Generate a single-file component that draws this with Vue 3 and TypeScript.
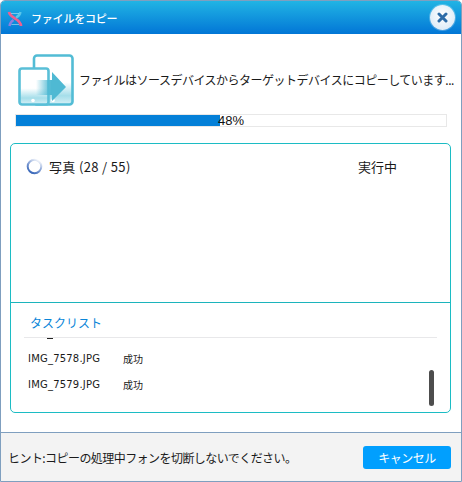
<script setup lang="ts">
const percent = 48
const tasks = [
  { name: 'IMG_7578.JPG', status: '成功' },
  { name: 'IMG_7579.JPG', status: '成功' },
]
</script>

<template>
  <div class="window">
    <header class="titlebar">
      <svg class="logo" width="20" height="20" viewBox="0 0 20 20" fill="none">
        <path d="M3 4 C4.500 11 14.500 10 15 18" stroke="#ee5f8f" stroke-width="2.800" />
        <path d="M14.500 4 C14 7 12 8.500 10 9.500" stroke="#58c6ea" stroke-width="2.400" />
        <path d="M7.500 12 C5 13.500 3.800 15.500 3.500 18" stroke="#8c7fe0" stroke-width="2.400" />
        <path d="M5 5.500 H13 M5.500 16.500 H13" stroke="#9fd8ee" stroke-width="1" opacity=".7" />
      </svg>
      <span class="title">ファイルをコピー</span>
      <button class="close" aria-label="閉じる">
        <svg width="11" height="11" viewBox="0 0 11 11">
          <path d="M2 2 L9 9 M9 2 L2 9" stroke="#2d6ca8" stroke-width="3" stroke-linecap="round" />
        </svg>
      </button>
    </header>

    <main class="body">
      <section class="intro">
        <svg class="copy-icon" width="56" height="52" viewBox="0 0 56 52">
          <defs>
            <linearGradient id="fade" x1="0" y1="0" x2="1" y2="0">
              <stop offset="0" stop-color="#4fb9d3" stop-opacity="0" />
              <stop offset=".5" stop-color="#4fb9d3" />
            </linearGradient>
            <linearGradient id="base" x1="0" y1="0" x2="0" y2="1">
              <stop offset=".55" stop-color="#ffffff" />
              <stop offset=".82" stop-color="#a5deea" />
              <stop offset="1" stop-color="#d6f0f6" />
            </linearGradient>
          </defs>
          <rect x="16" y="1.500" width="38.500" height="49" rx="3" fill="url(#base)" stroke="#52bcd5" stroke-width="2.600" />
          <rect x="1.500" y="14.500" width="29" height="36" rx="2.500" fill="url(#base)" stroke="#59bfd7" stroke-width="2.600" />
          <circle cx="15" cy="46.500" r="1.800" fill="#fff" />
          <circle cx="35" cy="46.500" r="1.800" fill="#fff" />
          <path d="M18 26 H34 V18 L48 33 L34 47 V41 H18 Z" fill="url(#fade)" />
        </svg>
        <p class="message">ファイルはソースデバイスからターゲットデバイスにコピーしています...</p>
      </section>

      <div class="progress">
        <div class="progress-fill" :style="{ width: `calc(${percent}% - 2px)` }"></div>
        <span class="progress-label">{{ percent }}%</span>
      </div>

      <section class="panel">
        <div class="current">
          <svg class="spinner" width="17" height="17" viewBox="0 0 17 17" fill="none">
            <defs>
              <linearGradient id="spin" x1=".2" y1="1" x2=".8" y2="0">
                <stop offset="0" stop-color="#2f5fb5" />
                <stop offset=".55" stop-color="#8fa9d9" />
                <stop offset="1" stop-color="#ffffff" />
              </linearGradient>
            </defs>
            <circle cx="8.500" cy="8.500" r="6.800" stroke="url(#spin)" stroke-width="2" />
          </svg>
          <span class="current-name">写真 (28 / 55)</span>
          <span class="current-state">実行中</span>
        </div>
        <div class="tasks">
          <h2 class="tasks-title">タスクリスト</h2>
          <div class="tasks-rule"><span class="clipped-mark"></span></div>
          <div class="task-rows">
            <div v-for="t in tasks" :key="t.name" class="task">
              <span class="task-name">{{ t.name }}</span>
              <span class="task-status">{{ t.status }}</span>
            </div>
            <div class="scrollbar"></div>
          </div>
        </div>
      </section>
    </main>

    <footer class="footer">
      <span class="hint">ヒント:コピーの処理中フォンを切断しないでください。</span>
      <button class="cancel">キャンセル</button>
    </footer>
  </div>
</template>

<style>
html, body { margin: 0; background: #fff; }
</style>

<style scoped>
.window {
  width: 462px;
  height: 482px;
  box-sizing: border-box;
  border: 1px solid #7f9fbf;
  border-radius: 5px 5px 0 0;
  display: flex;
  flex-direction: column;
  overflow: hidden;
  background: #fff;
  font-family: "Noto Sans CJK JP", "Liberation Sans", sans-serif;
  color: #1a1a1a;
}
.titlebar {
  height: 33px;
  flex: none;
  display: flex;
  align-items: center;
  padding: 0 6px 0 5px;
  background: linear-gradient(#21b4e4, #0276d6);
}
.logo { flex: none; }
.title {
  margin-left: 5px;
  color: #fff;
  font-size: 11px;
  font-weight: 500;
  letter-spacing: -0.2px;
}
.close {
  margin-left: auto;
  width: 25px;
  height: 25px;
  padding: 0;
  border: 0;
  border-radius: 50%;
  background: radial-gradient(circle at 50% 40%, #fff, #dbeaf6 80%);
  box-shadow: 0 0 0 1px rgba(255, 255, 255, .25);
  display: flex;
  align-items: center;
  justify-content: center;
}
.body {
  flex: 1;
  min-height: 0;
  display: flex;
  flex-direction: column;
  padding: 20px 10px 19px 9px;
}
.intro {
  display: flex;
  align-items: center;
  padding-left: 8px;
  height: 52px;
}
.copy-icon { flex: none; }
.message {
  margin: 0 0 1px 5px;
  white-space: nowrap;
  font-size: 12px;
  letter-spacing: -0.5px;
}
.progress {
  position: relative;
  margin: 8px 4px 0 5px;
  height: 13px;
  box-sizing: border-box;
  border: 1px solid #e8e8e8;
  background: #fff;
}
.progress-fill {
  height: 100%;
  background: #0480d8;
}
.progress-label {
  position: absolute;
  inset: 0;
  text-align: center;
  font: 13px/11px "Liberation Sans", sans-serif;
  color: #111;
}
.panel {
  flex: 1;
  margin-top: 16px;
  min-height: 0;
  border: 1px solid #1cbcc4;
  border-radius: 5px;
  display: flex;
  flex-direction: column;
}
.current {
  height: 159px;
  flex: none;
  box-sizing: border-box;
  border-bottom: 1px solid #1cb4bc;
  display: flex;
  align-items: flex-start;
  padding: 14px 0 0 15px;
  font-size: 13px;
  line-height: 17px;
}
.spinner { flex: none; }
.current-name { margin-left: 6px; width: 309px; letter-spacing: 0.35px; }
.tasks {
  flex: 1;
  min-height: 0;
  display: flex;
  flex-direction: column;
  padding: 0 13px;
}
.tasks-title {
  margin: 10px 0 0 6px;
  font-size: 12px;
  line-height: 20px;
  font-weight: 400;
  color: #0a86d8;
}
.tasks-rule {
  margin-top: 4px;
  height: 1px;
  background: #e8e8ea;
  position: relative;
}
.clipped-mark {
  position: absolute;
  left: 23px;
  top: 1px;
  width: 6px;
  height: 1px;
  background: #222;
}
.task-rows {
  position: relative;
  flex: 1;
  padding: 7px 0 0 4px;
}
.task {
  display: flex;
  height: 26px;
  align-items: center;
  font-size: 10px;
}
.task-name {
  width: 95px;
  font-family: "DejaVu Sans", sans-serif;
  font-size: 10px;
  letter-spacing: 0.2px;
}
.scrollbar {
  position: absolute;
  right: 3px;
  top: 32px;
  width: 5px;
  height: 36px;
  border-radius: 3px;
  background: #4d4d4d;
}
.footer {
  flex: none;
  height: 49px;
  box-sizing: border-box;
  border-top: 1px solid #7f9fbf;
  background: #f3f3f3;
  display: flex;
  align-items: center;
  justify-content: space-between;
  padding: 0 10px 0 7px;
}
.hint { font-size: 12px; letter-spacing: -0.56px; }
.cancel {
  width: 88px;
  height: 23px;
  padding: 0;
  border: 0;
  border-radius: 3px;
  background: #019ffe;
  color: #fff;
  font: 12px "Noto Sans CJK JP", sans-serif;
  letter-spacing: -0.5px;
}
</style>
